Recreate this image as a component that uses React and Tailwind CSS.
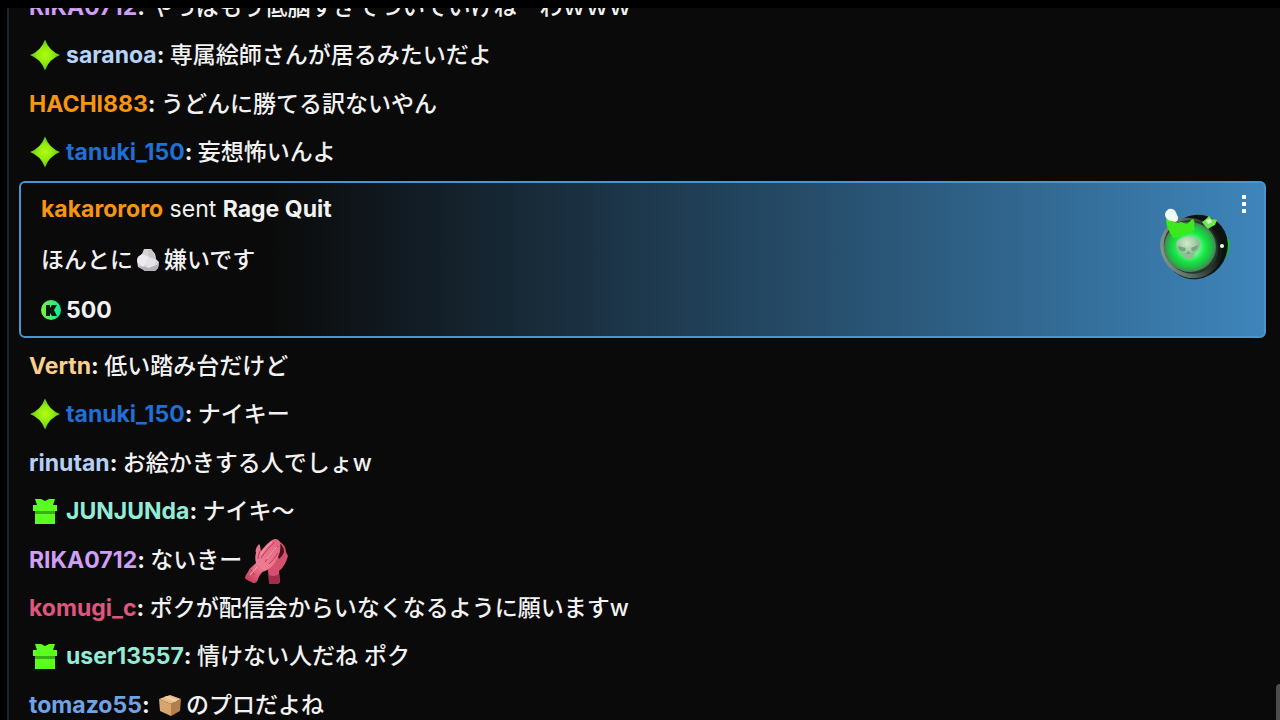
import React from 'react'

const messages = [
  // full-width w, as typed from a Japanese IME
  { user: 'RIKA0712', color: 'text-[#cf9ff5]', text: 'やっぱもう低脳すぎてついていけねーわ\uFF57\uFF57\uFF57' },
  { user: 'saranoa', color: 'text-[#b5d4f7]', badge: 'og', text: '専属絵師さんが居るみたいだよ' },
  { user: 'HACHI883', color: 'text-[#f79412]', text: 'うどんに勝てる訳ないやん' },
  { user: 'tanuki_150', color: 'text-[#1f6fd6]', badge: 'og', text: '妄想怖いんよ' },
  { gift: true, user: 'kakarororo', color: 'text-[#f79412]', name: 'Rage Quit', amount: 500 },
  { user: 'Vertn', color: 'text-[#fccf8c]', text: '低い踏み台だけど' },
  { user: 'tanuki_150', color: 'text-[#1f6fd6]', badge: 'og', text: 'ナイキー' },
  { user: 'rinutan', color: 'text-[#b5d0f5]', text: 'お絵かきする人でしょw' },
  { user: 'JUNJUNda', color: 'text-[#93ebd8]', badge: 'gift', text: 'ナイキ〜' },
  { user: 'RIKA0712', color: 'text-[#cf9ff5]', text: 'ないきー', emote: true },
  { user: 'komugi_c', color: 'text-[#e0557f]', text: 'ポクが配信会からいなくなるように願いますw' },
  { user: 'user13557', color: 'text-[#93ebd8]', badge: 'gift', text: '情けない人だね ポク' },
  { user: 'tomazo55', color: 'text-[#6fa3e8]', box: true, text: 'のプロだよね' },
]

function SparkBadge() {
  return (
    <svg className="h-8 w-8 shrink-0" viewBox="0 0 32 32" aria-hidden="true">
      <defs>
        <radialGradient id="spark">
          <stop offset="0" stopColor="#b4fa10" />
          <stop offset="0.5" stopColor="#90ec10" />
          <stop offset="1" stopColor="#5cc414" />
        </radialGradient>
      </defs>
      <path fill="url(#spark)" d="M16 0.500Q20 12 31 16Q20 20 16 31.500Q12 20 1 16Q12 12 16 0.500Z" />
    </svg>
  )
}

function GiftBadge() {
  return (
    <svg className="h-8 w-8 shrink-0" viewBox="0 0 32 32" aria-hidden="true">
      <path fill="#5bff1f" d="M6 4h6l4 2 4-2h6l-2 6h4v6H4v-6h4z" />
      <path fill="#36b312" d="M6 16h20v3H6z" />
      <path fill="#5bff1f" d="M6 19h20v10H6z" />
    </svg>
  )
}

function RockEmoji() {
  return (
    <svg className="mr-1 ml-[3px] h-6 w-6 shrink-0" viewBox="0 0 24 24" aria-hidden="true">
      <path fill="#d6d4d9" d="M8 1h7l4 5 1 5 3 3-1 6-3 3H9l-3-2-4-2-1-6 1-4 4-3z" />
      <path fill="#eceaee" d="M6 6l7 3-1 5-5 5-5-4-1-3 1-3z" />
      <path fill="#c9c6cd" d="M15 1l4 5 1 6-7-3-1-7z" />
      <path fill="#e4e2e7" d="M13 9l7 3-2 6-6 2-3-4z" />
      <path fill="#b3b0b8" d="M2 18l7 1 4 1 5-2 5-2-1 4-3 3H9l-3-2z" />
    </svg>
  )
}

function BoxEmoji() {
  return (
    <svg className="mr-1 ml-[3px] h-6 w-6 shrink-0" viewBox="0 0 24 24" aria-hidden="true">
      <path fill="#e9bd88" d="M1 6l11-4 11 4-10 5z" />
      <path fill="#d9a56e" d="M1 6l12 5v12L2 18z" />
      <path fill="#b27e4c" d="M13 11l10-5-1 12-9 5z" />
      <path fill="#f1cfa1" d="M6 4l3-1 11 4-3 2z" />
    </svg>
  )
}

function ClapEmote() {
  return (
    <svg className="h-12 w-12 shrink-0" viewBox="1 -1 48 48" aria-hidden="true">
      <defs>
        <linearGradient id="hand" x1="0.8" y1="0" x2="0.2" y2="1">
          <stop offset="0" stopColor="#e26882" />
          <stop offset="0.6" stopColor="#f07c94" />
          <stop offset="1" stopColor="#c9405f" />
        </linearGradient>
      </defs>
      <path fill="#d4506e" d="M37 4c5 2 8 6 8 11l2 4c-2 7-5 12-9 15l1 11c-3 4-9 4-11 1l-1-13 5-20z" />
      <path fill="#4c0d1e" d="M37 6c4 1 6 5 6 9-1 3-3 5-5 7-2-5-4-9-1-16z" />
      <path fill="#a52c4a" d="M28 38c3 2 7 1 10-1l1 8c-3 4-9 4-11 1z" />
      <path
        fill="url(#hand)"
        d="M18 7c2 2 1 5 2 7C24 9 29 3 34 2c3 0 5 2 5 4 1 5 0 10-2 14-3 6-7 12-13 14-4 1-5 4-7 8-1 4-3 4-5 4-3-2-6-2-8-5 0-3 3-5 4-8 2-3 5-5 7-7-1-4-1-7 0-10-1-3 0-5 3-9z"
      />
      <path fill="none" stroke="#b53c58" d="M19 14c-1 3-2 5-2 8M34 5C28 10 24 15 20 21M37 9C32 14 28 20 24 25M37 16c-3 5-6 8-9 11M8 32c3 1 4 3 5 6" />
      <path fill="none" stroke="#fba9b8" d="M31 5c-4 3-8 7-11 12M36 10c-4 4-7 8-10 12M9 38l7-8" />
    </svg>
  )
}

function CoinIcon() {
  return (
    <svg className="h-5 w-5 shrink-0" viewBox="0 0 20 20" aria-hidden="true">
      <defs>
        <linearGradient id="coin">
          <stop offset="0" stopColor="#7cf53c" />
          <stop offset="1" stopColor="#10e6a0" />
        </linearGradient>
      </defs>
      <circle cx="10" cy="10" r="10" fill="url(#coin)" />
      <path fill="#06180d" d="M5 5h4v3l2-3h5l-3 5 3 6h-5l-2-3v3H5z" />
    </svg>
  )
}

function RageQuitArt() {
  return (
    <svg className="h-20 w-20" viewBox="0 -2 80 80" aria-hidden="true">
      <defs>
        <radialGradient id="glow">
          <stop offset="0.3" stopColor="#7dfaa0" />
          <stop offset="0.6" stopColor="#16e843" />
          <stop offset="0.85" stopColor="#22b845" />
          <stop offset="1" stopColor="#4f7b5c" />
        </radialGradient>
        <linearGradient id="rim" x1="0" y1="1" x2="1" y2="0">
          <stop offset="0" stopColor="#93a69a" />
          <stop offset="0.45" stopColor="#5c6e63" />
          <stop offset="0.8" stopColor="#141c17" />
        </linearGradient>
        <radialGradient id="skull" cx="0.45" cy="0.3">
          <stop offset="0" stopColor="#d2ecca" />
          <stop offset="1" stopColor="#8fbd94" />
        </radialGradient>
      </defs>
      <path fill="none" stroke="#18b83a" strokeWidth="3" d="M72 34c2 10-2 18-9 25" />
      <ellipse cx="40" cy="42" rx="33" ry="31" fill="#0d130f" transform="rotate(-50 40 42)" />
      <ellipse cx="35" cy="43" rx="32" ry="29" fill="url(#rim)" transform="rotate(40 35 43)" />
      <ellipse cx="35" cy="42" rx="28" ry="26" fill="#26382c" transform="rotate(40 35 42)" />
      <ellipse cx="34" cy="42" rx="26" ry="25" fill="url(#glow)" />
      <path fill="#3de81c" d="M10 14c5 0 8 4 12 4 3-2 5-1 8 1 3 0 4-4 7-5 3 3 0 7 2 10-3 5-7 4-10 6-4-1-7 4-12 3-3-6-7-11-7-19z" />
      <path fill="#f0fff2" d="M9 9c1-4 4-6 7-5 4 1 4 4 6 8 1 4-3 6-6 4-4 0-7-3-7-7z" />
      <path fill="#6fe650" d="M46 17l4-3 3-3 3 3 5 1-2 5-4 2-3 2-3-3z" />
      <path fill="#d9ffc9" d="M50 15l4-1 2 3-4 2z" />
      <path fill="url(#skull)" d="M20 38c3-8 21-9 24-1 1 5-2 9-5 11l-2 5c-4 2-7 1-9 0l-2-4c-4-2-6-6-6-11z" />
      <path fill="#6fa67b" d="M22 41l8 2-1 3c-4 1-7-1-7-5zM35 43l7-3c0 4-3 6-6 6zM30 49l2-3 3 3z" />
      <circle cx="66" cy="41" r="2" fill="#eafff0" />
    </svg>
  )
}

function Message({ m }) {
  return (
    <li className={m.badge ? 'flex h-[49px] items-center px-2.5 pb-px' : 'flex h-12 items-center px-2.5'}>
      {m.badge && (
        <span className="mr-[5px] flex">{m.badge === 'og' ? <SparkBadge /> : <GiftBadge />}</span>
      )}
      <p className="flex items-center whitespace-pre">
        <span className={m.color + ' font-bold'}>{m.user}</span>
        <span className="font-bold">: </span>
        {m.box && <BoxEmoji />}
        <span className="font-medium">{m.text}</span>
        {m.emote && <ClapEmote />}
      </p>
    </li>
  )
}

function GiftMessage({ m }) {
  return (
    <li className="relative my-1 flex h-[157px] flex-col justify-between rounded-md border-2 border-[#4a96cc] bg-[linear-gradient(90deg,#0a0a0a_20%,#3e85bb_100%)] px-5 py-3">
      <p className="whitespace-pre">
        <span className={m.color + ' font-bold'}>{m.user}</span> sent <span className="font-bold">{m.name}</span>
      </p>
      <p className="flex items-center font-medium">
        ほんとに
        <RockEmoji />
        嫌いです
      </p>
      <p className="flex items-center gap-[5px] font-bold">
        <CoinIcon />
        {m.amount}
      </p>
      <div className="absolute top-5 right-7">
        <RageQuitArt />
      </div>
      <button aria-label="More" className="absolute top-3 right-[18px] flex flex-col gap-[3px]">
        <span className="size-1 bg-white" />
        <span className="size-1 bg-white" />
        <span className="size-1 bg-white" />
      </button>
    </li>
  )
}

export default function App() {
  return (
    <div className="flex h-screen flex-col overflow-hidden bg-black pt-2 font-['Inter','Noto_Sans_CJK_JP',sans-serif] text-[23px] leading-7 text-[#f2f2f2]">
      <main className="relative ml-[7px] min-h-0 flex-1 overflow-hidden border-l-2 border-[#1c2436] bg-[#0a0a0a] pr-3.5 pl-2.5">
        <ul className="-mt-[25px]">
          {messages.map((m, i) => (m.gift ? <GiftMessage key={i} m={m} /> : <Message key={i} m={m} />))}
        </ul>
        <div className="absolute right-0 bottom-0 h-9 w-1 rounded-tl bg-[#4d4d4d]" />
      </main>
    </div>
  )
}
